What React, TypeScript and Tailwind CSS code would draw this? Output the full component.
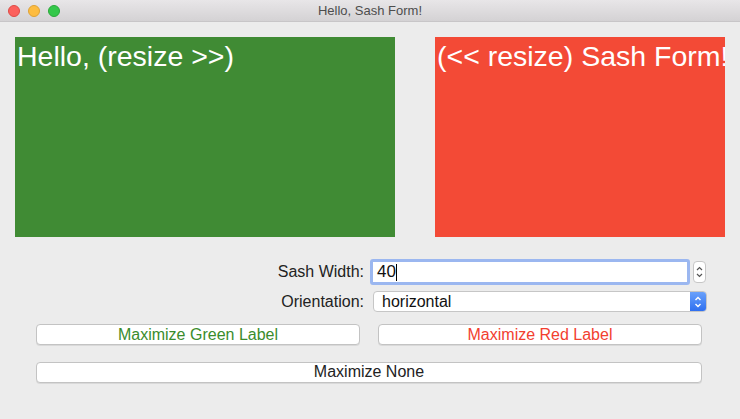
import React from 'react'

const font = { fontFamily: '"Liberation Sans", Arial, sans-serif' }

const Lights = () => (
  <div className="flex items-center gap-[8px] pl-[8px]">
    <span className="w-[12px] h-[12px] rounded-full bg-[#fc605c] border border-[#de4a45]" />
    <span className="w-[12px] h-[12px] rounded-full bg-[#fdbc40] border border-[#dea235]" />
    <span className="w-[12px] h-[12px] rounded-full bg-[#34c84a] border border-[#2aa83a]" />
  </div>
)

const Btn = ({ label, color, w }: { label: string; color: string; w: string }) => (
  <button className={`${w} h-[21px] rounded-[4px] bg-white border border-[#c3c3c3] shadow-[0_1px_0_rgba(0,0,0,0.08)] text-[16px] leading-none ${color}`}>
    {label}
  </button>
)

export default function App() {
  return (
    <div className="w-[740px] h-[419px] bg-[#ececec] overflow-hidden flex flex-col" style={font}>
      {/* title bar */}
      <div className="relative h-[22px] flex items-center bg-gradient-to-b from-[#e8e6e8] to-[#d4d2d4] border-b border-[#c8c6c8]">
        <Lights />
        <div className="absolute inset-0 flex items-center justify-center text-[13px] text-[#4d4d4d]">Hello, Sash Form!</div>
      </div>

      {/* sash form */}
      <div className="flex pt-[15px] pl-[15px] gap-[40px]">
        <div className="w-[380px] h-[200px] bg-[#408b34] text-white text-[28.5px] leading-[38px] whitespace-nowrap overflow-hidden pl-[2px]">Hello, (resize &gt;&gt;)</div>
        <div className="w-[290px] h-[200px] bg-[#f34a36] text-white text-[28.5px] leading-[38px] whitespace-nowrap overflow-hidden pl-[2px]">(&lt;&lt; resize) Sash Form!</div>
      </div>

      {/* controls */}
      <div className="flex flex-col pt-[22px]">
        <div className="flex items-center h-[26px]">
          <div className="w-[364px] text-right text-[16px] text-[#222]">Sash Width:</div>
          <div className="ml-[6px] w-[320px] h-[26px] rounded-[3px] border-[3px] border-[#9bb7f0] bg-white flex items-center pl-[4px] text-[17px] text-[#111]">
            40<span className="w-[1px] h-[17px] bg-black" />
          </div>
          <div className="ml-[3px] w-[13px] h-[22px] rounded-[4px] bg-white border border-[#c6c6c6] flex flex-col items-center justify-center text-[#555]">
            <svg width="7" height="16" viewBox="0 0 7 16" fill="none" stroke="currentColor" strokeWidth="1.2"><path d="M1 6 3.5 3.5 6 6M1 10 3.5 12.5 6 10" /></svg>
          </div>
        </div>
        <div className="flex items-center mt-[6px] h-[21px]">
          <div className="w-[364px] text-right text-[16px] text-[#222]">Orientation:</div>
          <div className="ml-[9px] w-[334px] h-[21px] rounded-[4px] bg-white border border-[#c6c6c6] flex items-center overflow-hidden">
            <span className="flex-1 pl-[8px] text-[16px] text-[#111]">horizontal</span>
            <div className="w-[16px] h-full bg-gradient-to-b from-[#6aa1fb] to-[#2f6ff0] flex items-center justify-center text-white">
              <svg width="8" height="14" viewBox="0 0 8 14" fill="none" stroke="currentColor" strokeWidth="1.4"><path d="M1.5 5 4 2.5 6.5 5M1.5 9 4 11.5 6.5 9" /></svg>
            </div>
          </div>
        </div>
        <div className="flex pl-[36px] gap-[18px] mt-[12px]">
          <Btn label="Maximize Green Label" color="text-[#3a8c2c]" w="w-[324px]" />
          <Btn label="Maximize Red Label" color="text-[#f2402f]" w="w-[324px]" />
        </div>
        <div className="pl-[36px] mt-[15px]">
          <Btn label="Maximize None" color="text-[#222]" w="w-[666px]" />
        </div>
      </div>
    </div>
  )
}
